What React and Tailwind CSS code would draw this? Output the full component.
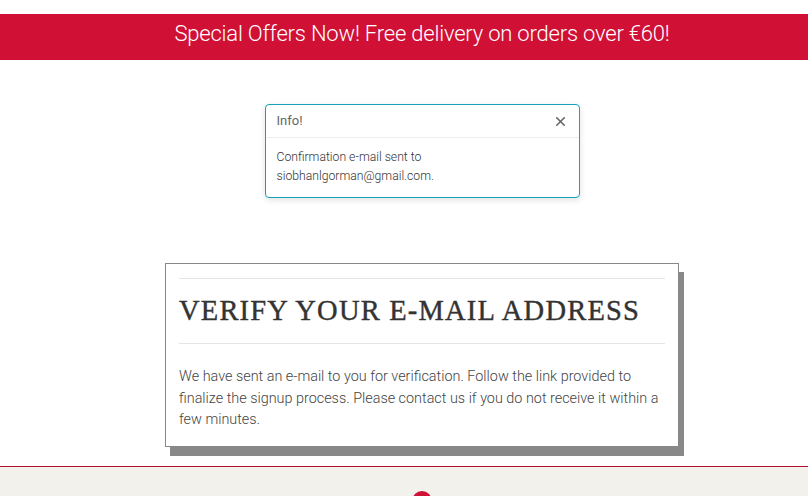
import { X } from 'lucide-react'

const App = () => {
  return (
    <div className="min-h-[496px] bg-white font-['Roboto',sans-serif] overflow-hidden">
      {/* Offer banner */}
      <div className="mt-[14px] h-[46px] bg-[#d11036] pl-[36px] pb-[8px] flex items-center justify-center">
        <p className="text-[22px] font-light text-white tracking-[-0.2px]">
          Special Offers Now! Free delivery on orders over €60!
        </p>
      </div>

      <div className="pl-[36px]">
        {/* Alert */}
        <div className="mx-auto mt-[44px] w-[315px] rounded-[4px] border border-[#17a2b8] bg-white shadow-[0_2px_6px_rgba(0,0,0,0.12)]">
          <div className="flex h-[33px] items-center justify-between border-b border-[#eee] px-[11px]">
            <span className="text-[13px] text-[#666]">Info!</span>
            <X className="h-[15px] w-[15px] text-[#666]" strokeWidth={2.5} />
          </div>
          <div className="px-[11px] pt-[10px] pb-[11px] text-[12.2px] leading-[19px] font-light text-[#333]">
            Confirmation e-mail sent to
            <br />
            siobhanlgorman@gmail.com.
          </div>
        </div>

        {/* Verify card */}
        <div className="mx-auto mt-[65px] w-[514px] border border-[#888] bg-white px-[13px] pt-[14px] pb-[15px] shadow-[5px_9px_0_#888]">
          <div className="border-t border-[#e5e5e5]" />
          <h1 className="py-[12px] whitespace-nowrap font-['Liberation_Serif',serif] text-[28.5px] leading-[40px] tracking-[1.2px] text-[#333] [-webkit-text-stroke:0.4px_#333]">
            VERIFY YOUR E-MAIL ADDRESS
          </h1>
          <div className="border-t border-[#e5e5e5]" />
          <p className="mt-[22px] text-[14.4px] leading-[21.5px] font-light text-[#444]">
            We have sent an e-mail to you for verification. Follow the link provided to finalize the signup
            process. Please contact us if you do not receive it within a few minutes.
          </p>
        </div>
      </div>

      {/* Footer */}
      <div className="mt-[19px] h-[40px] border-t border-[#b3102f] bg-[#f3f1ec] pl-[36px] flex justify-center">
        <div className="mt-[24px] h-[20px] w-[20px] rounded-full bg-[#d11036]" />
      </div>
    </div>
  )
}

export default App
